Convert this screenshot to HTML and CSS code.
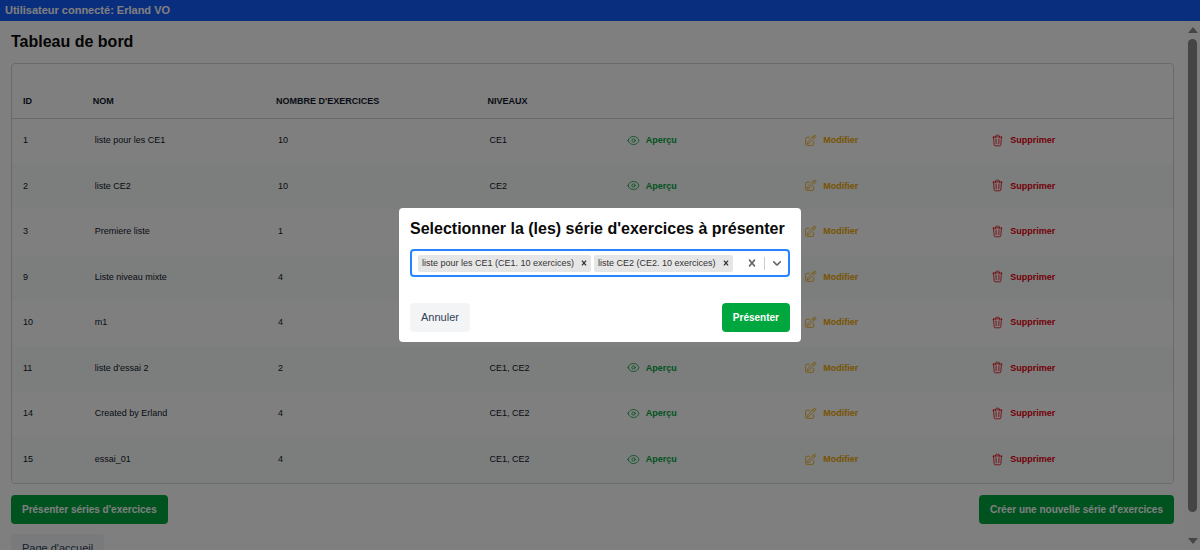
FILE: index.html
```html
<!DOCTYPE html>
<html lang="fr">
<head>
    <meta charset="UTF-8">
    <meta name="viewport" content="width=device-width, initial-scale=1.0">
    <title>Tableau de bord</title>
    <link rel="stylesheet" href="styles.css">
</head>
<body>
    <header class="topbar">Utilisateur connecté: Erland VO</header>

    <div class="page">
        <main class="content">
            <h1>Tableau de bord</h1>

            <div class="table-card">
                <table class="series-table">
                    <colgroup>
                        <col class="col-id">
                        <col class="col-name">
                        <col class="col-count">
                        <col class="col-level">
                        <col class="col-view">
                        <col class="col-edit">
                        <col class="col-delete">
                    </colgroup>
                    <thead>
                        <tr>
                            <th>ID</th>
                            <th>NOM</th>
                            <th>NOMBRE D'EXERCICES</th>
                            <th>NIVEAUX</th>
                            <th></th>
                            <th></th>
                            <th></th>
                        </tr>
                    </thead>
                    <tbody id="seriesRows"></tbody>
                </table>
            </div>

            <div class="page-actions">
                <button type="button" class="btn btn-green">Présenter séries d'exercices</button>
                <button type="button" class="btn btn-green">Créer une nouvelle série d'exercices</button>
            </div>
            <a href="/" class="btn btn-gray">Page d'accueil</a>
        </main>

        <div class="scrollbar">
            <svg class="scroll-arrow" viewBox="0 0 10 6"><path d="M5 0l5 6H0z"/></svg>
            <div class="scroll-thumb"></div>
            <svg class="scroll-arrow" viewBox="0 0 10 6"><path d="M0 0h10L5 6z"/></svg>
        </div>
    </div>

    <div class="overlay">
        <div class="modal" role="dialog" aria-labelledby="modalTitle">
            <h2 id="modalTitle">Selectionner la (les) série d'exercices à présenter</h2>

            <div class="select">
                <div class="select-values">
                    <span class="tag">liste pour les CE1 (CE1. 10 exercices)
                        <button type="button" aria-label="Retirer liste pour les CE1"><svg viewBox="0 0 20 20"><use href="#icon-cross"/></svg></button>
                    </span>
                    <span class="tag">liste CE2 (CE2. 10 exercices)
                        <button type="button" aria-label="Retirer liste CE2"><svg viewBox="0 0 20 20"><use href="#icon-cross"/></svg></button>
                    </span>
                    <input type="text" class="select-input" aria-labelledby="modalTitle">
                </div>
                <div class="select-controls">
                    <button type="button" aria-label="Tout effacer"><svg viewBox="0 0 20 20"><use href="#icon-cross"/></svg></button>
                    <span class="separator"></span>
                    <button type="button" aria-label="Ouvrir la liste"><svg viewBox="0 0 20 20"><use href="#icon-chevron"/></svg></button>
                </div>
            </div>

            <div class="modal-actions">
                <button type="button" class="btn btn-gray">Annuler</button>
                <button type="button" class="btn btn-green">Présenter</button>
            </div>
        </div>
    </div>

    <svg class="icon-defs">
        <symbol id="icon-cross" viewBox="0 0 20 20">
            <path fill="currentColor" d="M14.348 14.849c-0.469 0.469-1.229 0.469-1.697 0l-2.651-3.030-2.651 3.029c-0.469 0.469-1.229 0.469-1.697 0-0.469-0.469-0.469-1.229 0-1.697l2.758-3.15-2.759-3.152c-0.469-0.469-0.469-1.228 0-1.697s1.228-0.469 1.697 0l2.652 3.031 2.651-3.031c0.469-0.469 1.228-0.469 1.697 0s0.469 1.229 0 1.697l-2.758 3.152 2.758 3.15c0.469 0.469 0.469 1.229 0 1.698z"/>
        </symbol>
        <symbol id="icon-chevron" viewBox="0 0 20 20">
            <path fill="currentColor" d="M4.516 7.548c0.436-0.446 1.043-0.481 1.576 0l3.908 3.747 3.908-3.747c0.533-0.481 1.141-0.446 1.574 0 0.436 0.445 0.408 1.197 0 1.615-0.406 0.418-4.695 4.502-4.695 4.502-0.217 0.223-0.502 0.335-0.787 0.335s-0.57-0.112-0.789-0.335c0 0-4.287-4.084-4.695-4.502s-0.436-1.17 0-1.615z"/>
        </symbol>
        <symbol id="icon-eye" viewBox="0 0 24 24">
            <path d="M2.036 12.322a1.012 1.012 0 0 1 0-.639C3.423 7.51 7.36 4.5 12 4.5c4.638 0 8.573 3.007 9.963 7.178.07.207.07.431 0 .639C20.577 16.49 16.64 19.5 12 19.5c-4.638 0-8.573-3.007-9.963-7.178Z"/>
            <path d="M15 12a3 3 0 1 1-6 0 3 3 0 0 1 6 0Z"/>
        </symbol>
        <symbol id="icon-edit" viewBox="0 0 24 24">
            <path d="m16.862 4.487 1.687-1.688a1.875 1.875 0 1 1 2.652 2.652L10.582 16.07a4.5 4.5 0 0 1-1.897 1.13L6 18l.8-2.685a4.5 4.5 0 0 1 1.13-1.897l8.932-8.931Zm0 0L19.5 7.125M18 14v4.75A2.25 2.25 0 0 1 15.75 21H5.25A2.25 2.25 0 0 1 3 18.75V8.25A2.25 2.25 0 0 1 5.25 6H10"/>
        </symbol>
        <symbol id="icon-trash" viewBox="0 0 24 24">
            <path d="m14.74 9-.346 9m-4.788 0L9.26 9m9.968-3.21c.342.052.682.107 1.022.166m-1.022-.165L18.16 19.673a2.25 2.25 0 0 1-2.244 2.077H8.084a2.25 2.25 0 0 1-2.244-2.077L4.772 5.79m14.456 0a48.108 48.108 0 0 0-3.478-.397m-12 .562c.34-.059.68-.114 1.022-.165m0 0a48.11 48.11 0 0 1 3.478-.397m7.5 0v-.916c0-1.18-.91-2.164-2.09-2.201a51.964 51.964 0 0 0-3.32 0c-1.18.037-2.09 1.022-2.09 2.201v.916m7.5 0a48.667 48.667 0 0 0-7.5 0"/>
        </symbol>
    </svg>

    <script>
        const series = [
            { id: 1, name: 'liste pour les CE1', count: 10, levels: 'CE1' },
            { id: 2, name: 'liste CE2', count: 10, levels: 'CE2' },
            { id: 3, name: 'Premiere liste', count: 1, levels: 'CE1' },
            { id: 9, name: 'Liste niveau mixte', count: 4, levels: 'CE1, CE2' },
            { id: 10, name: 'm1', count: 4, levels: 'CE1, CE2' },
            { id: 11, name: "liste d'essai 2", count: 2, levels: 'CE1, CE2' },
            { id: 14, name: 'Created by Erland', count: 4, levels: 'CE1, CE2' },
            { id: 15, name: 'essai_01', count: 4, levels: 'CE1, CE2' }
        ];

        function actionButton(type, icon, label) {
            return `<button type="button" class="action action-${type}">
                <svg class="icon" viewBox="0 0 24 24"><use href="#icon-${icon}"/></svg>${label}
            </button>`;
        }

        document.getElementById('seriesRows').innerHTML = series.map(s => `
            <tr>
                <td>${s.id}</td>
                <td>${s.name}</td>
                <td>${s.count}</td>
                <td>${s.levels}</td>
                <td>${actionButton('view', 'eye', 'Aperçu')}</td>
                <td>${actionButton('edit', 'edit', 'Modifier')}</td>
                <td>${actionButton('delete', 'trash', 'Supprimer')}</td>
            </tr>`).join('');
    </script>
</body>
</html>
```

FILE: styles.css
```css
* {
    margin: 0;
    padding: 0;
    box-sizing: border-box;
}

body {
    font-family: "Liberation Sans", Arial, sans-serif;
    font-size: 11px;
    color: #0a0a0a;
    background: white;
    height: 100vh;
    display: flex;
    flex-direction: column;
    overflow: hidden;
}

button,
input {
    font: inherit;
    color: inherit;
    border: none;
    background: none;
}

button {
    cursor: pointer;
}

h1,
h2 {
    font-size: 16px;
    line-height: 20px;
    font-weight: bold;
}

.topbar {
    padding: 3px 5px;
    line-height: 15px;
    font-weight: bold;
    color: white;
    background: #155dfc;
}

.page {
    flex: 1;
    min-height: 0;
    display: flex;
}

.content {
    flex: 1;
    padding: 11px 11px 0;
    overflow: hidden;
}

.table-card {
    margin: 11px 0;
    border: 1px solid #d0d5d8;
    border-radius: 4px;
    overflow: hidden;
}

.series-table {
    width: 100%;
    table-layout: fixed;
    border-collapse: collapse;
    font-size: 9px;
    color: #0f172b;
}

.col-id { width: 6%; }
.col-name { width: 15.8%; }
.col-count { width: 18.2%; }
.col-level { width: 12%; }
.col-view { width: 15.3%; }
.col-edit { width: 16.1%; }

.series-table th {
    height: 54px;
    padding: 0 11px 12px;
    text-align: left;
    vertical-align: bottom;
    border-bottom: 1px solid #d0d5d8;
}

.series-table td {
    height: 45px;
    padding: 0 13px 2px;
}

.series-table td:first-child,
.series-table td:nth-child(n + 5) {
    padding: 0 11px 2px;
}

.series-table tbody tr:nth-child(odd) td {
    height: 46px;
}

.series-table tbody tr:last-child td {
    height: 46px;
}

.series-table tbody tr:nth-child(even) {
    background: #f8fbfa;
}

.action {
    display: flex;
    align-items: center;
    gap: 6px;
    font-weight: bold;
}

.action-view { color: #00a63e; }
.action-edit { color: #f0a800; }
.action-delete { color: #e7000b; }

.icon {
    width: 13px;
    height: 13px;
    fill: none;
    stroke: currentColor;
    stroke-width: 1.5;
    stroke-linecap: round;
    stroke-linejoin: round;
}

.icon-defs {
    display: none;
}

.page-actions {
    display: flex;
    justify-content: space-between;
    margin-bottom: 10px;
}

.btn {
    display: inline-block;
    padding: 7px 11px;
    line-height: 15px;
    border-radius: 4px;
    text-decoration: none;
}

.btn-green {
    font-size: 10px;
    font-weight: bold;
    color: white;
    background: #00a63e;
}

.btn-gray {
    color: #314158;
    background: #f3f4f6;
}

.scrollbar {
    width: 15px;
    padding: 6px 0;
    display: flex;
    flex-direction: column;
    align-items: center;
    gap: 6px;
    background: #fcfcfc;
}

.scroll-arrow {
    width: 10px;
    height: 6px;
    fill: #8b8b8b;
}

.scroll-thumb {
    flex: 1;
    width: 9px;
    margin-bottom: 20px;
    border-radius: 5px;
    background: #8b8b8b;
}

.overlay {
    position: fixed;
    inset: 0;
    display: flex;
    align-items: center;
    justify-content: center;
    background: rgba(0, 0, 0, 0.5);
}

.modal {
    width: 402px;
    padding: 11px 11px 10px;
    border-radius: 4px;
    background: white;
}

.select {
    display: flex;
    align-items: center;
    height: 28px;
    margin: 10px 0 26px;
    border: 2px solid #2684ff;
    border-radius: 4px;
}

.select-values {
    flex: 1;
    display: flex;
    gap: 3px;
    padding-left: 6px;
}

.select-input {
    flex: 1;
    width: 0;
    min-width: 0;
    outline: none;
}

.tag {
    display: flex;
    align-items: center;
    gap: 5px;
    height: 17px;
    padding: 0 2px 0 4px;
    font-size: 9px;
    white-space: nowrap;
    color: #333;
    background: #e6e6e6;
    border-radius: 2px;
}

.tag button,
.select-controls button {
    display: flex;
}

.tag svg {
    width: 10px;
    height: 10px;
}

.select-controls {
    display: flex;
    align-items: center;
    gap: 5px;
    padding-right: 4px;
    color: #666;
}

.select-controls svg {
    width: 14px;
    height: 14px;
}

.separator {
    width: 1px;
    height: 13px;
    background: #ccc;
}

.modal-actions {
    display: flex;
    justify-content: space-between;
}
```
